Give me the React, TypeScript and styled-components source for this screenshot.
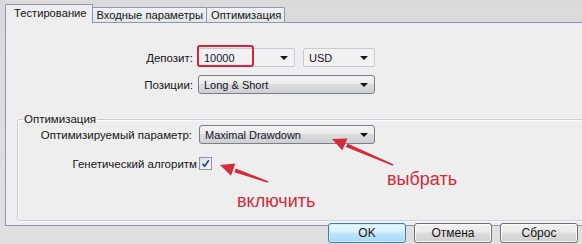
import React from 'react';
import styled, { createGlobalStyle } from 'styled-components';

const Global = createGlobalStyle`
  html, body { margin: 0; padding: 0; }
  body {
    width: 582px; height: 244px; overflow: hidden; background: #dddddd;
    font-family: "Liberation Sans", Arial, sans-serif; font-size: 11.5px; color: #161616;
  }
`;

const Window = styled.div`
  position: relative;
  width: 582px;
  height: 244px;
  overflow: hidden;
  background: linear-gradient(#dadada, #e0e0e0);
  display: flex;
  flex-direction: column;
`;

const TabStrip = styled.div`
  display: flex;
  align-items: flex-end;
  height: 22px;
  padding-left: 5px;
  box-sizing: border-box;
  position: relative;
  z-index: 2;
`;

const Tab = styled.div<{ $active?: boolean }>`
  box-sizing: border-box;
  display: flex;
  align-items: center;
  height: ${p => (p.$active ? '19px' : '15px')};
  margin-bottom: ${p => (p.$active ? '-1px' : '0')};
  margin-left: ${p => (p.$active ? '0' : '-1px')};
  padding: ${p => (p.$active ? '0 5px 2px 8px' : '0 3px 0 4px')};
  border: 1px solid #8d99ad;
  border-bottom: none;
  border-radius: 2px 2px 0 0;
  background: ${p => (p.$active ? '#eeeeee' : 'linear-gradient(#f1f2f4, #e2e4e8)')};
  color: #161616;
  font-size: 11.2px;
  white-space: nowrap;
  &:first-child { margin-left: 0; }
`;

const Panel = styled.div`
  box-sizing: border-box;
  margin-left: 5px;
  width: 590px;
  height: 204px;
  border: 1px solid #8d99ad;
  background: #eeeeee;
  display: flex;
  flex-direction: column;
  padding: 25px 0 4px 0;
`;

const FormGrid = styled.div<{ $label: number; $gap: number }>`
  display: grid;
  grid-template-columns: ${p => p.$label}px auto;
  column-gap: ${p => p.$gap}px;
  row-gap: 8px;
  align-items: center;
  justify-content: start;
`;

const Label = styled.div`
  text-align: right;
  white-space: nowrap;
`;

const Pair = styled.div`
  display: flex;
  gap: 8px;
`;

const Combo = styled.div<{ $w: number; $flat?: boolean }>`
  position: relative;
  box-sizing: border-box;
  width: ${p => p.$w}px;
  height: 19px;
  display: flex;
  align-items: center;
  padding: 0 18px 0 5px;
  border-radius: ${p => (p.$flat ? '2px' : '3px')};
  border: 1px solid ${p => (p.$flat ? '#c7cbd3' : '#7b7f8a')};
  background: ${p =>
    p.$flat
      ? '#f1f1f1'
      : 'linear-gradient(#f3f3f3 0%, #ebebeb 45%, #dcdcdc 50%, #cfd0d4 100%)'};
  color: #14142a;
  font-size: 11px;
  white-space: nowrap;
`;

const Caret = styled.span`
  position: absolute;
  right: 6px;
  top: 7px;
  width: 0;
  height: 0;
  border-left: 4px solid transparent;
  border-right: 4px solid transparent;
  border-top: 4px solid #111111;
`;

const Group = styled.fieldset`
  margin: 19px 10px 0 11px;
  padding: 0;
  flex: 1;
  border: 1px solid #cbd0d8;
  border-radius: 2px;
  box-shadow: inset 1px 1px 0 #fafafa, 1px 1px 0 #fafafa;
  display: flex;
  flex-direction: column;
  min-width: 0;
`;

const Legend = styled.legend`
  margin-left: 5px;
  padding: 0 1px;
  color: #161616;
`;

const GroupBody = styled.div`
  padding-top: 0;
  display: flex;
  flex-direction: column;
  gap: 13px;
`;

const CheckRow = styled.div`
  display: grid;
  grid-template-columns: 179px auto;
  column-gap: 2px;
  align-items: center;
`;

const CheckBox = styled.div`
  box-sizing: border-box;
  width: 13px;
  height: 13px;
  border: 1px solid #8d95a6;
  background: linear-gradient(135deg, #dcdfe6, #f6f6f8);
  display: flex;
  align-items: center;
  justify-content: center;
`;

const ButtonRow = styled.div`
  display: flex;
  justify-content: flex-end;
  gap: 8px;
  padding-right: 4px;
  margin-top: -3px;
  position: relative;
  z-index: 2;
`;

const Button = styled.div<{ $default?: boolean }>`
  box-sizing: border-box;
  width: 78px;
  height: 20px;
  display: flex;
  align-items: center;
  justify-content: center;
  border-radius: 3px;
  border: 1px solid ${p => (p.$default ? '#3c7fb1' : '#707070')};
  background: ${p =>
    p.$default
      ? 'linear-gradient(#eaf6fd 0%, #d9f0fc 45%, #bee6fd 50%, #a7d9f5 100%)'
      : 'linear-gradient(#f2f2f2 0%, #ebebeb 45%, #dddddd 50%, #cfcfcf 100%)'};
  box-shadow: inset 0 0 0 1px ${p => (p.$default ? '#cdeefd' : '#fbfbfb')};
  color: #161616;
  font-size: 12px;
`;

const Overlay = styled.svg`
  position: absolute;
  left: 0;
  top: 0;
  width: 582px;
  height: 244px;
  pointer-events: none;
  z-index: 5;
`;

const Note = styled.div<{ $x: number; $y: number }>`
  position: absolute;
  left: ${p => p.$x}px;
  top: ${p => p.$y}px;
  font-family: "Liberation Sans", Arial, sans-serif;
  font-size: 18px;
  line-height: 18px;
  color: #d22b3a;
  z-index: 6;
  white-space: nowrap;
`;

const Highlight = styled.div`
  position: absolute;
  left: 197px;
  top: 45px;
  width: 57px;
  height: 22px;
  box-sizing: border-box;
  border: 2px solid #d0253a;
  border-radius: 3px;
  z-index: 4;
`;

function Arrow({ tip, tail }: { tip: [number, number]; tail: [number, number] }) {
  const dx = tip[0] - tail[0];
  const dy = tip[1] - tail[1];
  const len = Math.hypot(dx, dy);
  const ux = dx / len;
  const uy = dy / len;
  const nx = -uy;
  const ny = ux;
  const head = 16;
  const hw = 6.5;
  const bx = tip[0] - ux * head;
  const by = tip[1] - uy * head;
  const tw = 0.8;
  const sw = 2;
  const shaft = [
    [tail[0] + nx * tw, tail[1] + ny * tw],
    [bx + nx * sw, by + ny * sw],
    [bx - nx * sw, by - ny * sw],
    [tail[0] - nx * tw, tail[1] - ny * tw],
  ]
    .map(p => p.join(','))
    .join(' ');
  const headPts = [
    [tip[0], tip[1]],
    [bx + nx * hw + ux * 2, by + ny * hw + uy * 2],
    [bx - nx * hw + ux * 2, by - ny * hw + uy * 2],
  ]
    .map(p => p.join(','))
    .join(' ');
  return (
    <g fill="#d22b3a">
      <polygon points={shaft} />
      <polygon points={headPts} />
    </g>
  );
}

export default function App() {
  return (
    <Window>
      <Global />
      <TabStrip>
        <Tab $active>Тестирование</Tab>
        <Tab>Входные параметры</Tab>
        <Tab>Оптимизация</Tab>
      </TabStrip>
      <Panel>
        <FormGrid $label={187} $gap={5}>
          <Label>Депозит:</Label>
          <Pair>
            <Combo $w={97} $flat>
              10000
              <Caret />
            </Combo>
            <Combo $w={72} $flat>
              USD
              <Caret />
            </Combo>
          </Pair>
          <Label>Позиции:</Label>
          <Combo $w={177}>
            Long &amp; Short
            <Caret />
          </Combo>
        </FormGrid>
        <Group>
          <Legend>Оптимизация</Legend>
          <GroupBody>
            <FormGrid $label={174} $gap={7}>
              <Label>Оптимизируемый параметр:</Label>
              <Combo $w={176}>
                Maximal Drawdown
                <Caret />
              </Combo>
            </FormGrid>
            <CheckRow>
              <Label>Генетический алгоритм</Label>
              <CheckBox>
                <svg width="9" height="9" viewBox="0 0 9 9">
                  <path d="M1.5 4.8 L3.6 7.2 L7.8 1.2" fill="none" stroke="#1f3a86" strokeWidth="1.6" />
                </svg>
              </CheckBox>
            </CheckRow>
          </GroupBody>
        </Group>
      </Panel>
      <ButtonRow>
        <Button $default>OK</Button>
        <Button>Отмена</Button>
        <Button>Сброс</Button>
      </ButtonRow>
      <Highlight />
      <Overlay viewBox="0 0 582 244">
        <Arrow tip={[332, 139]} tail={[393, 165]} />
        <Arrow tip={[220, 165]} tail={[268, 182]} />
      </Overlay>
      <Note $x={387} $y={170}>выбрать</Note>
      <Note $x={237} $y={192}>включить</Note>
    </Window>
  );
}
